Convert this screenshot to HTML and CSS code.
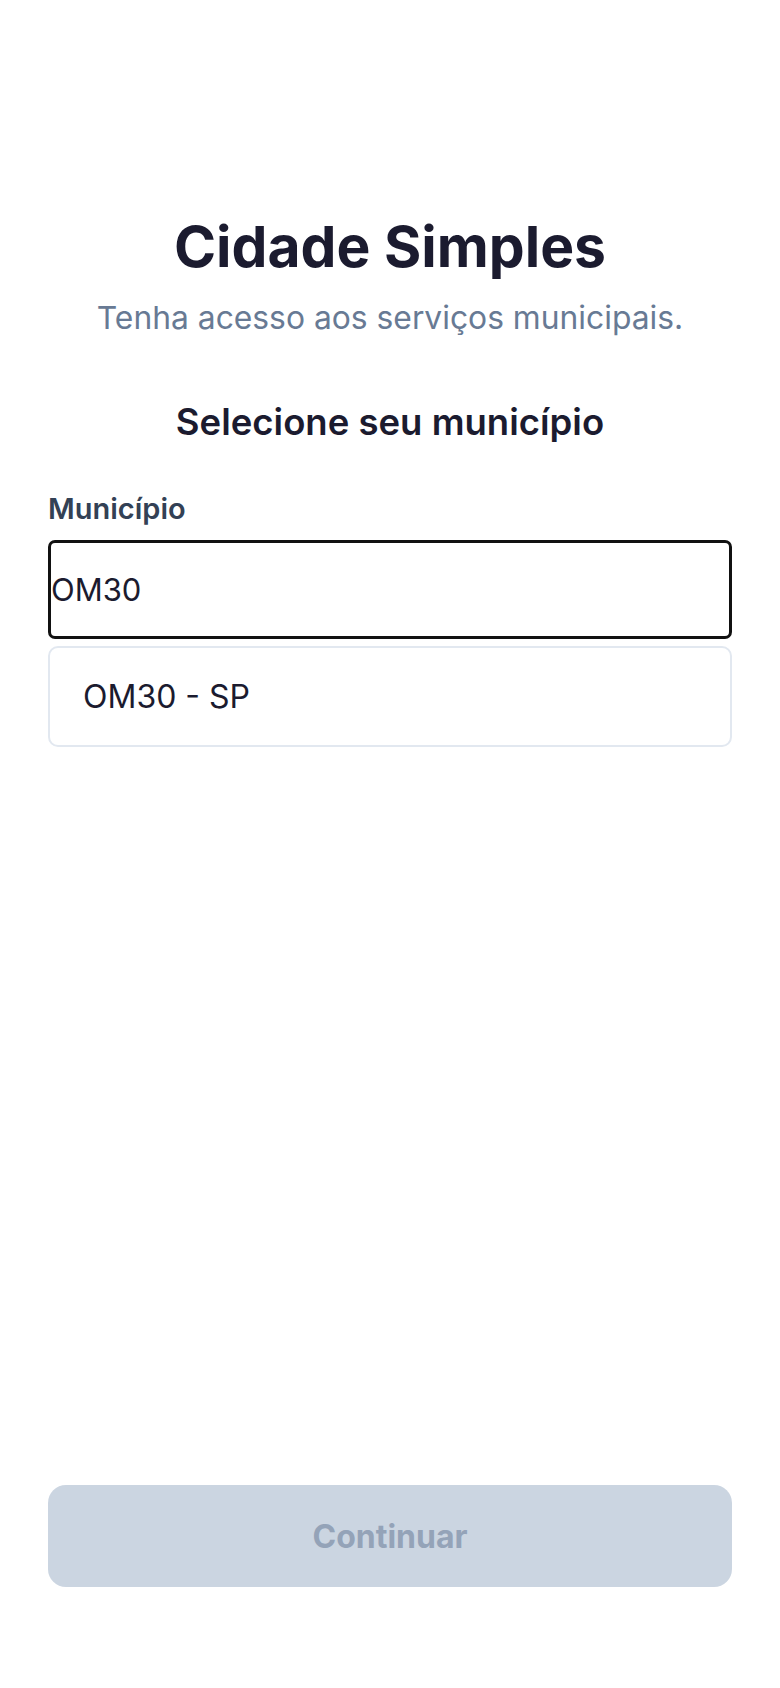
FILE: index.html
```html
<!DOCTYPE html>
<html lang="pt-BR">
<head>
<meta charset="utf-8">
<title>Cidade Simples</title>
<link rel="stylesheet" href="styles.css">
</head>
<body>
<main class="screen">
  <header class="hero">
    <h1 class="title">Cidade Simples</h1>
    <p class="subtitle">Tenha acesso aos serviços municipais.</p>
  </header>
  <section class="picker">
    <h2 class="picker-title">Selecione seu município</h2>
    <label class="field-label" for="city">Município</label>
    <div class="input">OM30</div>
    <ul class="options">
      <li class="option">OM30 - SP</li>
    </ul>
  </section>
  <div class="actions">
    <button class="btn" disabled>Continuar</button>
  </div>
</main>
</body>
</html>
```
FILE: styles.css
```css
* { box-sizing: border-box; }
html, body { margin: 0; padding: 0; background: #ffffff; }
body { font-family: Inter, "Noto Sans", sans-serif; color: #1a1a2e; }
.screen {
  min-height: 1688px;
  display: flex;
  flex-direction: column;
  padding: 213px 48px 101px;
}
.hero { text-align: center; }
.title {
  margin: 0;
  font-size: 57px;
  line-height: 68px;
  font-weight: 700;
  color: #1b1b2f;
}
.subtitle {
  margin: 17px 0 0;
  font-size: 31.8px;
  line-height: 40px;
  color: #687a94;
}
.picker { margin-top: 62px; display: flex; flex-direction: column; }
.picker-title {
  margin: 0;
  text-align: center;
  font-size: 36.5px;
  line-height: 44px;
  font-weight: 600;
  color: #1b1b2f;
}
.field-label {
  margin-top: 48px;
  font-size: 29px;
  line-height: 34px;
  font-weight: 600;
  color: #334155;
}
.input {
  margin-top: 14px;
  height: 99px;
  border: 3px solid #111111;
  border-radius: 7px;
  display: flex;
  align-items: center;
  font-size: 31px;
  color: #1b1b2f;
  padding: 0;
}
.options { list-style: none; margin: 7px 0 0; padding: 0; }
.option {
  height: 101px;
  border: 2px solid #e2e8f0;
  border-radius: 10px;
  display: flex;
  align-items: center;
  padding: 0 33px;
  font-size: 32px;
  color: #1b1b2f;
}
.actions { margin-top: auto; }
.btn {
  width: 100%;
  height: 102px;
  border: none;
  border-radius: 18px;
  background: #cbd5e1;
  color: #94a3b8;
  font-family: Inter, "Noto Sans", sans-serif;
  font-size: 32px;
  font-weight: 700;
}
```
